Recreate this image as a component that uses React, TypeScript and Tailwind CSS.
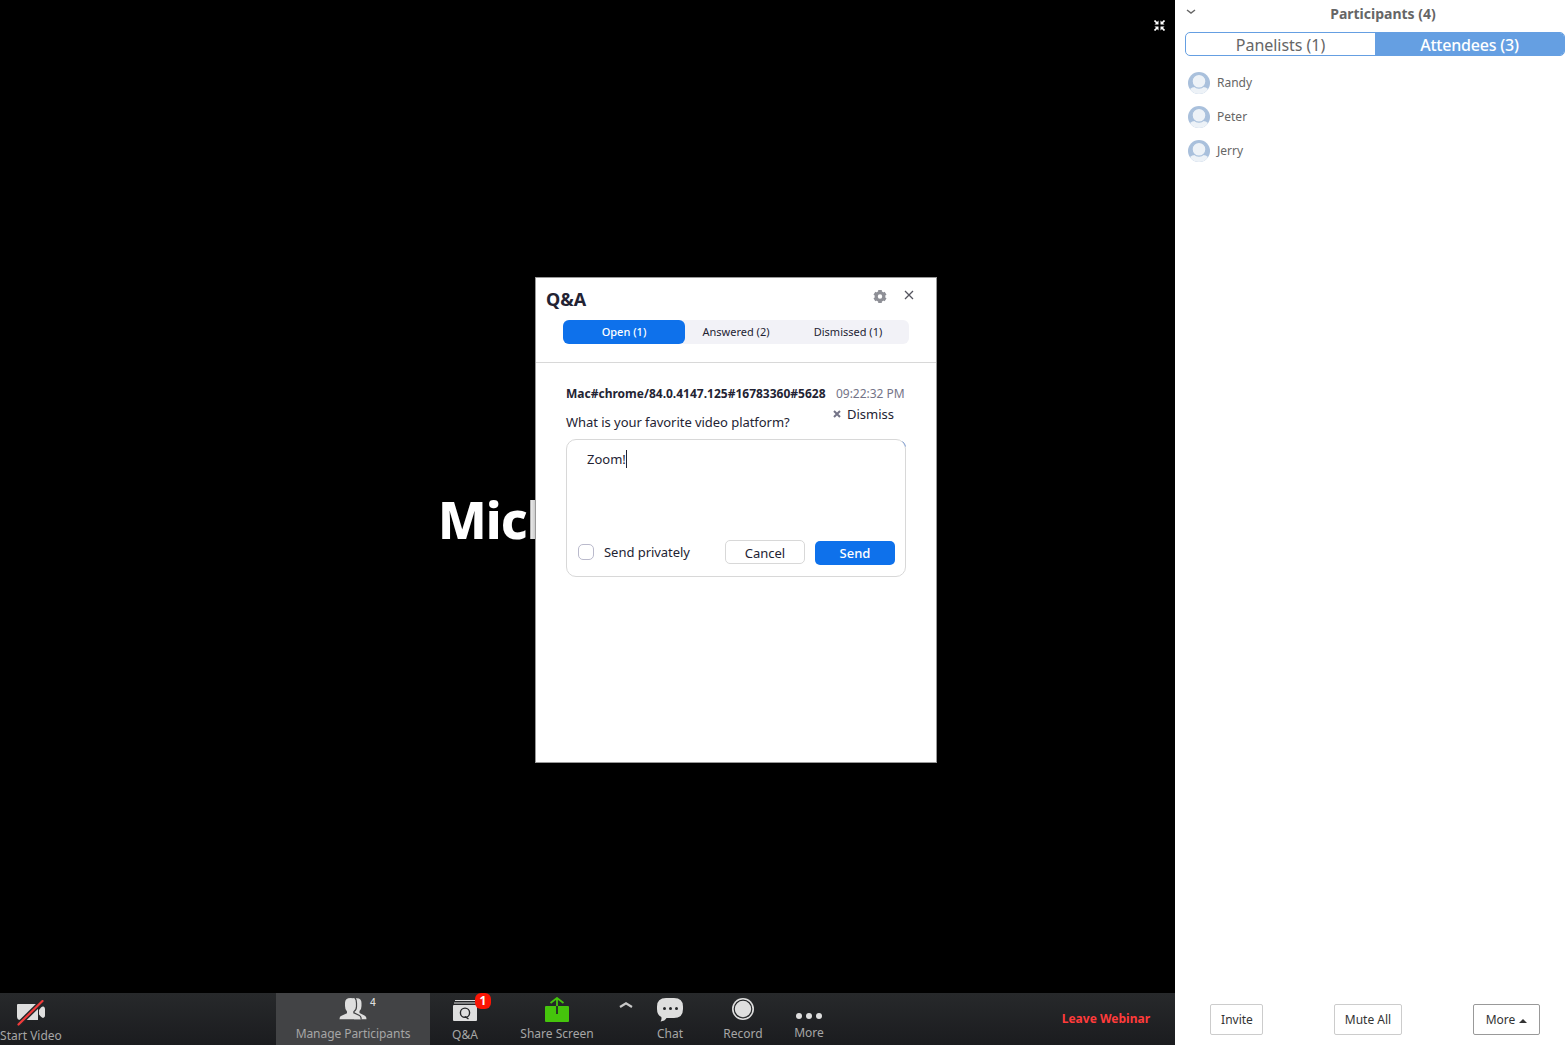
import { useState } from "react";
import type { ReactNode } from "react";
import clsx from "clsx";

const attendees = ["Randy", "Peter", "Jerry"];
const qaTabs = ["Open (1)", "Answered (2)", "Dismissed (1)"];

const VideoOffIcon = () => (
  <svg width="30" height="26" viewBox="0 0 30 26">
    <path d="M2 4h17.500a2.500 2.500 0 0 1 2.500 2.500V20H4.500A3.500 3.500 0 0 1 1 16.500V5a1 1 0 0 1 1-1z" fill="#dedede" />
    <path d="M23 10l2-2.500q1.500-1.500 2.500-1 1.500.8 1.500 2.500v6.500q0 1.700-1.500 2.300-1 .5-2.500-1L23 14.500z" fill="#dedede" />
    <path d="M2.500 24.500L26.500 1" stroke="#242628" strokeWidth="5" />
    <path d="M2.500 24.500L26.500 1" stroke="#f23b3b" strokeWidth="2.200" strokeLinecap="round" />
  </svg>
);

const PeopleIcon = () => (
  <svg width="28" height="22" viewBox="0 0 28 22">
    <path d="M14 .3h4q4.500 0 4.500 4.700v3q0 3.500-2 5v2l5 2.500q2 1 2 3.700H15z" fill="#dedede" />
    <path
      d="M11.500 0Q17.300 0 17.300 5v3.500q0 3.500-2.800 5v1.700l5.500 2.500q2.200 1 2.200 3.500H.5q0-2.800 2-3.500l5.500-2.500v-1.700Q6 12 6 8V5q0-5 5.500-5z"
      fill="#dedede"
    />
    <path
      d="M16 0q1.500 1.500 1.500 5v3.500q0 3.500-2.500 5v1.300l5.500 2.700q1.700.8 1.700 4"
      fill="none"
      stroke="#424345"
      strokeWidth="1.200"
    />
  </svg>
);

const QaIcon = () => (
  <svg width="24" height="21" viewBox="0 0 24 21">
    <path d="M2 .5h20M1 3h22" stroke="#dedede" strokeWidth="1" />
    <rect y="5" width="24" height="16" rx="1" fill="#dedede" />
    <circle cx="12" cy="12.700" r="4.600" fill="none" stroke="#242628" strokeWidth="1.400" />
    <path d="M12 16.500l3.500 2.500" stroke="#242628" strokeWidth="1.400" />
  </svg>
);

const ShareIcon = () => (
  <svg width="24" height="25" viewBox="0 0 24 25">
    <rect y="9" width="24" height="16" rx="1" fill="#45c50c" />
    <path d="M12 2v7M5.500 6L12 1l6.500 5" fill="none" stroke="#45c50c" strokeWidth="1.800" />
    <path d="M12 9v8" stroke="#242628" strokeWidth="1.800" />
  </svg>
);

const ChatIcon = () => (
  <svg width="26" height="24" viewBox="0 0 26 24">
    <path
      d="M9 0h8q9 0 9 8.500v2.500q0 9-9 9H9.500q-1.500 3-6 3.500 1.500-2 .8-4.500Q0 17 0 11V8.500Q0 0 9 0z"
      fill="#dedede"
    />
    <circle cx="7.500" cy="10.500" r="1.500" fill="#242628" />
    <circle cx="13.500" cy="10.500" r="1.500" fill="#242628" />
    <circle cx="19.500" cy="10.500" r="1.500" fill="#242628" />
  </svg>
);

const RecordIcon = () => (
  <svg width="22" height="22" viewBox="0 0 22 22">
    <circle cx="11" cy="11" r="11" fill="#dedede" />
    <circle cx="11" cy="11" r="8.800" fill="#dedede" stroke="#242628" strokeWidth="1.200" />
  </svg>
);

const MoreIcon = () => (
  <svg width="26" height="6" viewBox="0 0 26 6">
    <circle cx="3" cy="3" r="3" fill="#dedede" />
    <circle cx="13" cy="3" r="3" fill="#dedede" />
    <circle cx="23" cy="3" r="3" fill="#dedede" />
  </svg>
);

const ExitFullscreenIcon = () => (
  <svg width="11" height="11" viewBox="0 0 11 11">
    <path
      d="M.5.5L3 3M10.500.5L8 3M.5 10.500L3 8M10.500 10.500L8 8"
      stroke="#fff"
      strokeWidth="1.700"
    />
    <path d="M4.500.5v4H.5zM6.500.5v4h4zM4.500 10.500v-4H.5zM6.500 10.500v-4h4z" fill="#fff" />
  </svg>
);

const GearIcon = () => (
  <svg width="14" height="14" viewBox="0 0 14 14">
    <circle cx="7" cy="7.500" r="3.800" fill="none" stroke="#8e8f96" strokeWidth="3.200" />
    <path
      d="M7 1v2.500M7 11.500V14M1.400 4.250l2.100 1.250M10.500 9.500l2.100 1.250M1.400 10.750L3.500 9.500M10.500 5.500l2.100-1.250"
      stroke="#8e8f96"
      strokeWidth="3.600"
    />
  </svg>
);

const CloseIcon = () => (
  <svg width="10" height="10" viewBox="0 0 10 10">
    <path d="M1 1l8 8M9 1L1 9" stroke="#55555f" strokeWidth="1.300" />
  </svg>
);

const Avatar = () => (
  <svg width="22" height="22" viewBox="0 0 22 22" className="rounded-full">
    <rect width="22" height="22" fill="#a9c0dc" />
    <path d="M2 17q2-2 5-2h8q3 0 5 2l-3 5H5z" fill="#edf2f7" />
    <circle cx="11" cy="9.300" r="6.900" fill="#edf2f7" stroke="#a9c0dc" strokeWidth="1.200" />
  </svg>
);

type ToolProps = {
  label: string;
  className: string;
  labelClass: string;
  children: ReactNode;
};

const Tool = ({ label, className, labelClass, children }: ToolProps) => (
  <button className={clsx("relative h-full shrink-0 flex flex-col items-center", className)}>
    {children}
    <span className={clsx("whitespace-nowrap leading-4 text-[#a6a6a6]", labelClass)}>{label}</span>
  </button>
);

const Toolbar = () => (
  <footer className="h-[52px] shrink-0 flex text-xs bg-linear-to-b from-[#27292b] to-[#1b1c1f]">
    <Tool label="Start Video" className="w-[62px] pt-[7px]" labelClass="mt-[2px]">
      <VideoOffIcon />
    </Tool>
    <Tool
      label="Manage Participants"
      className="ml-[214px] w-[154px] pt-[5px] bg-[#424345]"
      labelClass="mt-[6px] tracking-[-0.06px]"
    >
      <PeopleIcon />
      <span className="absolute left-[94px] top-[2px] text-[10px] leading-[14px] font-medium text-[#dedede]">
        4
      </span>
    </Tool>
    <Tool label="Q&A" className="w-[70px] pt-[7px]" labelClass="mt-[6px]">
      <QaIcon />
      <span className="absolute left-[45px] top-0 w-4 h-4 rounded-[6px] bg-[#fb1505] text-white font-bold leading-4 text-center">
        1
      </span>
    </Tool>
    <Tool label="Share Screen" className="w-[114px] pt-1" labelClass="mt-1">
      <ShareIcon />
    </Tool>
    <button className="w-[23px] h-full flex justify-center pt-[8px]">
      <svg width="14" height="7" viewBox="0 0 14 7">
        <path d="M1 6l6-3.800L13 6" fill="none" stroke="#c8c8c8" strokeWidth="2.200" />
      </svg>
    </button>
    <Tool label="Chat" className="ml-px w-[64px] pt-[5px]" labelClass="mt-1">
      <ChatIcon />
    </Tool>
    <Tool label="Record" className="ml-[9px] w-[64px] pt-[5px]" labelClass="mt-[6px]">
      <RecordIcon />
    </Tool>
    <Tool label="More" className="w-[68px] pt-5" labelClass="mt-[6px]">
      <MoreIcon />
    </Tool>
    <button className="ml-auto mr-[25px] font-bold text-[#ff3b3b]">Leave Webinar</button>
  </footer>
);

const QaWindow = () => {
  const [active, setActive] = useState(0);

  return (
    <section className="absolute left-[535px] top-[277px] w-[402px] h-[486px] bg-white border border-[#999] shadow-[0_0_10px_rgba(0,0,0,0.4)] text-[#232333]">
      <header className="h-[85px] border-b border-[#d8d8d8]">
        <div className="h-[42px] flex pl-[10px] pr-[22px]">
          <h2 className="text-lg leading-[22px] pt-[10px] font-bold">Q&A</h2>
          <button className="ml-auto h-[14px] mt-[11px]">
            <GearIcon />
          </button>
          <button className="ml-[17px] h-[10px] mt-[12px]">
            <CloseIcon />
          </button>
        </div>
        <nav className="ml-[27px] w-[346px] h-6 flex rounded-[6px] bg-[#f2f2f7] text-[11px]">
          {qaTabs.map((tab, i) => (
            <button
              key={tab}
              onClick={() => setActive(i)}
              className={clsx(
                "h-full rounded-[6px]",
                i === 1 ? "w-[102px]" : "w-[122px]",
                active === i && "bg-[#0e71eb] text-white font-medium",
              )}
            >
              {tab}
            </button>
          ))}
        </nav>
      </header>
      <div className="px-[30px] pt-[22px]">
        <div className="flex text-xs leading-[18px] whitespace-nowrap">
          <span className="font-bold">Mac#chrome/84.0.4147.125#16783360#5628</span>
          <span className="ml-auto mr-[1.5px] tracking-[-0.04px] text-[#747487]">09:22:32 PM</span>
        </div>
        <div className="flex justify-between text-[13px] leading-[18px]">
          <p className="pt-[10px] tracking-[-0.05px]">What is your favorite video platform?</p>
          <button className="flex items-center h-[18px] mt-[2px] mr-[12px]">
            <svg width="8" height="8" viewBox="0 0 8 8" className="mr-[6px]">
              <path d="M1 1l6 6M7 1L1 7" stroke="#747487" strokeWidth="2" />
            </svg>
            Dismiss
          </button>
        </div>
        <div className="relative mt-2 h-[138px] flex flex-col border border-[#d8d8d8] rounded-[10px] text-[13px]">
          <svg width="6" height="8" viewBox="0 0 6 8" className="absolute -right-px -top-px">
            <path d="M2.500 2.500Q5 4.500 5.500 7.500" fill="none" stroke="#7f9fd6" strokeWidth="1" />
          </svg>
          <div className="flex-1 flex pl-5 pt-[10px] leading-[18px]">
            Zoom!
            <span className="w-px h-[18px] bg-[#232333]" />
          </div>
          <div className="h-9 mb-1 flex items-start pl-[11px] pr-[10px]">
            <span className="w-4 h-4 mt-[7.5px] border border-[#babacc] rounded-[5px]" />
            <span className="ml-[10px] mt-[7px] leading-[18px] tracking-[-0.04px]">Send privately</span>
            <button className="ml-auto w-20 h-6 mt-1 pt-px leading-[18px] border border-[#d8d8d8] rounded-[5px]">
              Cancel
            </button>
            <button className="ml-[10px] w-20 h-6 mt-[5px] leading-[18px] rounded-[5px] bg-[#0e71eb] text-white font-medium">
              Send
            </button>
          </div>
        </div>
      </div>
    </section>
  );
};

const ParticipantsPanel = () => (
  <aside className="w-[393px] h-full flex flex-col bg-white text-[#666]">
    <header className="h-8 flex items-start">
      <svg width="10" height="6" viewBox="0 0 10 6" className="ml-[11px] mt-[9px]">
        <path d="M1 1l4 3 4-3" fill="none" stroke="#666" strokeWidth="1.400" />
      </svg>
      <h1 className="flex-1 pl-0.5 text-center text-sm leading-5 pt-1 font-bold">Participants (4)</h1>
    </header>
    <div className="ml-[10px] mr-[3px] h-6 flex border border-[#659fe2] rounded-[5px] overflow-hidden leading-[24px] tracking-[-0.04px]">
      <button className="flex-1">Panelists (1)</button>
      <button className="flex-1 bg-[#659fe2] text-white font-medium tracking-[-0.2px]">
        Attendees (3)
      </button>
    </div>
    <ul className="flex-1 pl-[13px] pt-[10px] text-xs">
      {attendees.map((name) => (
        <li key={name} className="h-[34px] flex items-center gap-[7px]">
          <Avatar />
          {name}
        </li>
      ))}
    </ul>
    <footer className="flex justify-between pl-[35px] pr-[28px] pb-[10px] text-xs text-[#333]">
      <button className="w-[53px] h-[31px] pl-px border border-[#ccc] rounded-[2px]">Invite</button>
      <button className="w-[68px] h-[31px] border border-[#ccc] rounded-[2px]">Mute All</button>
      <button className="w-[67px] h-[31px] flex items-center justify-center border border-[#999] rounded-[2px]">
        More
        <svg width="8" height="4" viewBox="0 0 8 4" className="ml-1 mt-[3px]">
          <path d="M0 4l4-4 4 4z" fill="#333" />
        </svg>
      </button>
    </footer>
  </aside>
);

export default function App() {
  return (
    <div className="w-[1568px] h-[1045px] flex overflow-hidden bg-black font-['Noto_Sans',sans-serif]">
      <main className="relative w-[1175px] h-full flex flex-col">
        <div className="flex-1 flex items-start">
          <div className="pl-[438px] pt-[484px] text-[51px] leading-[70px] tracking-[-0.9px] font-extrabold text-white">
            Mich
          </div>
          <button className="ml-auto mr-[10px] mt-5">
            <ExitFullscreenIcon />
          </button>
        </div>
        <Toolbar />
        <QaWindow />
      </main>
      <ParticipantsPanel />
    </div>
  );
}
